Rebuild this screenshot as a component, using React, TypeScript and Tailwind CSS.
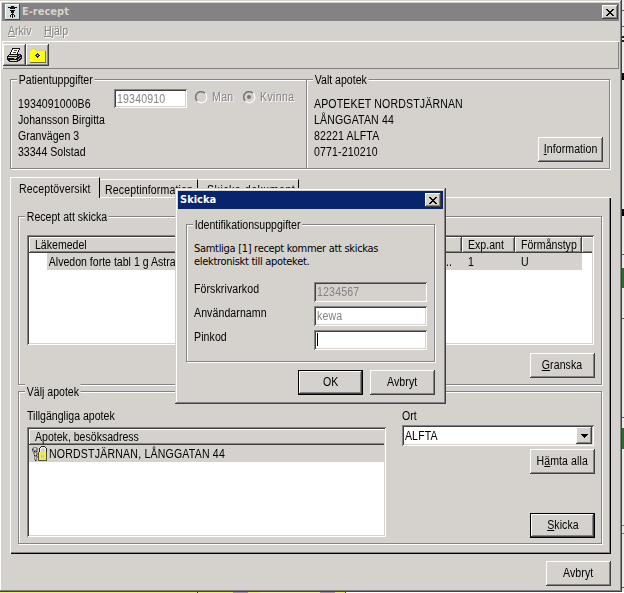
import type { ReactNode } from 'react';

function T({ children, className = '' }: { children: ReactNode; className?: string }) {
  return <span className={`inline-block origin-left scale-x-[0.88] whitespace-pre ${className}`}>{children}</span>;
}

function Button({ children, primary, className = '' }: { children: ReactNode; primary?: boolean; className?: string }) {
  const edge = primary
    ? 'border border-black shadow-[inset_-1px_-1px_0_#404040,inset_1px_1px_0_#fff,inset_-2px_-2px_0_#848284]'
    : 'shadow-[inset_-1px_-1px_0_#404040,inset_1px_1px_0_#fff,inset_-2px_-2px_0_#848284]';
  return (
    <button className={`flex h-[25px] w-[65px] shrink-0 items-center justify-center pb-px ${edge} ${className}`}>
      <span className="inline-block scale-x-[0.88] whitespace-pre tracking-[0.1px]">{children}</span>
    </button>
  );
}

function CloseButton() {
  return (
    <button className="flex h-[14px] w-4 items-center justify-center bg-[#d5d2cd] shadow-[inset_-1px_-1px_0_#404040,inset_1px_1px_0_#fff,inset_-2px_-2px_0_#848284]">
      <svg width="8" height="7" viewBox="0 0 8 7" shapeRendering="crispEdges">
        <path d="M0 0h2v1h1v1h2v-1h1v-1h2v1h-1v1h-1v1h-1v1h1v1h1v1h1v1h-2v-1h-1v-1h-2v1h-1v1h-2v-1h1v-1h1v-1h1v-1h-1v-1h-1v-1h-1z" fill="#000" />
      </svg>
    </button>
  );
}

function Group({ title, children, className = '' }: { title: string; children: ReactNode; className?: string }) {
  return (
    <section className={`relative shrink-0 border border-[#848284] shadow-[1px_1px_0_#fff,inset_1px_1px_0_#fff] ${className}`}>
      <T className="absolute -top-2 left-[6px] bg-[#d5d2cd] px-[2px] leading-[16px]">{title}</T>
      {children}
    </section>
  );
}

function Field({ value, className = '' }: { value: string; className?: string }) {
  return (
    <div className={`flex shrink-0 items-center pl-[3px] text-[#848284] shadow-[inset_1px_1px_0_#848284,inset_-1px_-1px_0_#fff,inset_2px_2px_0_#404040,inset_-2px_-2px_0_#d5d2cd] ${className}`}>
      <T className="tracking-[0.2px]">{value}</T>
    </div>
  );
}

function HeaderCell({ children, last, className = '' }: { children?: ReactNode; last?: boolean; className?: string }) {
  const edge = last
    ? 'shadow-[inset_0_-1px_0_#404040,inset_1px_1px_0_#fff,inset_0_-2px_0_#848284]'
    : 'shadow-[inset_-1px_-1px_0_#404040,inset_1px_1px_0_#fff,inset_-2px_-2px_0_#848284]';
  return (
    <div className={`flex h-4 items-center bg-[#d5d2cd] pl-[6px] ${edge} ${className}`}>
      <T>{children}</T>
    </div>
  );
}

function PersonIcon() {
  return (
    <svg width="15" height="16" viewBox="0 0 15 16" shapeRendering="crispEdges">
      <path d="M0 0h15v16H0z" fill="#d2dede" />
      <path d="M0 0h14v1H1v14H0z" fill="#fff" />
      <path d="M14 0h1v16H0v-1h14z" fill="#404848" />
      <path d="M3 3h3v1H3zM9 3h3v1H9zM5 4h2v1H5zM8 4h2v1H8zM6 2h3v2H6zM7 4h1v1H7zM5 6h1v1H5zM9 6h1v1H9zM6 6h3v3H6zM7 9h1v1H7zM6 10h3v1H6zM5 11h1v2H5zM9 11h1v2H9zM7 11h1v3H7z" fill="#111" />
    </svg>
  );
}

function PrinterIcon() {
  return (
    <svg width="17" height="16" viewBox="0 0 17 16" shapeRendering="crispEdges">
      <path d="M6 1h8v2h-1v2h-1v2h3v1h1v4h-1v1h-1v1h-2v1H3v-1H2v-1H1V9h1V8h1V7h1V5h1V3h1z" fill="#151515" />
      <path d="M7 2h6v1h-1v2h-1v2H5V5h1V3h1z" fill="#fff" />
      <path d="M8 3h3v1H8zM7 5h3v1H7z" fill="#444" />
      <path d="M3 8h8v1H3zM2 10h9v1H2zM4 13h7v1H4z" fill="#d5d2cd" />
      <path d="M12 9h1v1h-1zM13 8h1v1h-1zM12 12h1v1h-1zM13 11h1v1h-1zM14 10h1v1h-1z" fill="#aaa" />
      <path d="M8 11h2v1H8z" fill="#c8c84a" />
    </svg>
  );
}

function FolderIcon() {
  return (
    <svg width="17" height="15" viewBox="0 0 17 15" shapeRendering="crispEdges">
      <path d="M1 2h1V1h1V0h4v1h1v1h8v12H1z" fill="#ffff08" />
      <path d="M1 2h1V1h1V0h4v1h1v1h8v1H7V2H6V1H3v1H2v1H1z" fill="#d2c9a0" />
      <path d="M16 3h1v11h-1zM1 14h16v1H1z" fill="#77742a" />
      <path d="M6 7h1V6h1V5h1v1h1v1h1v1h-1v1H9v1H8V9H7V8H6z" fill="#fff" />
      <path d="M8 5h1v1h1v1h1v1h-1v1H9v1H8V9H7V8H6V7h1V6h1z" fill="#20207a" />
      <path d="M8 7h1v1H8z" fill="#fff" />
    </svg>
  );
}

function LockIcon() {
  return (
    <svg width="17" height="16" viewBox="0 0 17 16" shapeRendering="crispEdges">
      <path d="M2 1h4v1h1v4H6v1h1v2H6v1h1v2H6v3H4v-1H3V8H2V6H1V2h1z" fill="#888" />
      <path d="M3 2h2v2H3zM4 7h1v2H4zM4 11h1v2H4z" fill="#d5d2cd" />
      <path d="M1 3h1v1H1zM3 5h1v1H3zM5 5h1v1H5zM3 9h1v1H3zM5 9h1v1H5zM4 14h1v1H4z" fill="#222" />
      <path d="M8 2h1V1h1V0h4v1h1v1h1v5H8z" fill="#222" />
      <path d="M9 2h1V1h4v1h1v5h-1V3h-1V2h-2v1h-1v4H9z" fill="#eee" />
      <path d="M10 3h1V2h2v1h1v4h-4z" fill="#d5d2cd" />
      <path d="M7 6h9v9H7z" fill="#eaea62" />
      <path d="M7 6h1v8H7zM15 6h1v9H7v-1h8z" fill="#55552a" />
      <path d="M10 9h3v3h-3z" fill="#cfc9b0" />
    </svg>
  );
}

function Radio({ label, checked }: { label: string; checked?: boolean }) {
  return (
    <div className="flex items-center text-[#848284]">
      <svg width="13" height="13" viewBox="0 0 13 13">
        <circle cx="6" cy="6" r="5" fill="#d5d2cd" />
        <path d="M2.2 9.8A5.2 5.2 0 0 1 9.8 2.2" fill="none" stroke="#777577" strokeWidth="1.5" />
        <path d="M10.2 2.4A5.4 5.4 0 0 1 2.4 10.2" fill="none" stroke="#fff" strokeWidth="1.2" />
        {checked && <circle cx="6" cy="6" r="2" fill="#777577" />}
      </svg>
      <T className="ml-1 tracking-[0.4px] [text-shadow:1px_1px_0_#fff]">{label}</T>
    </div>
  );
}

function SendDialog() {
  const rows = [
    { label: 'Förskrivarkod', value: '1234567', bg: 'bg-[#d5d2cd]' },
    { label: 'Användarnamn', value: 'kewa', bg: 'bg-white' },
  ];
  return (
    <div className="absolute top-[188px] left-[175px] h-[216px] w-[271px] bg-[#d5d2cd] p-[3px] shadow-[inset_-1px_-1px_0_#404040,inset_1px_1px_0_#d5d2cd,inset_-2px_-2px_0_#848284,inset_2px_2px_0_#fff]">
      <div className="flex h-[18px] items-center justify-between bg-[#08246b] pr-[2px] pl-[2px] text-white">
        <span className="font-['DejaVu_Sans_Condensed','DejaVu_Sans',sans-serif] text-[11px] font-bold">Skicka</span>
        <CloseButton />
      </div>
      <Group title="Identifikationsuppgifter" className="mt-[15px] ml-2 h-[138px] w-[249px]">
        <p className="mt-[17px] ml-[7px] whitespace-pre font-['DejaVu_Sans_Condensed','DejaVu_Sans',sans-serif] text-[11px] leading-[13px] tracking-[-0.3px]">
          {'Samtliga [1] recept kommer att skickas\nelektroniskt till apoteket.'}
        </p>
        <div className="mt-[14px] mr-[7px] ml-[7px] flex flex-col gap-1">
          {rows.map((r) => (
            <div key={r.label} className="flex justify-between">
              <T className="leading-[15px] tracking-[0.1px]">{r.label}</T>
              <Field value={r.value} className={`h-5 w-[113px] ${r.bg}`} />
            </div>
          ))}
          <div className="flex justify-between">
            <T className="leading-[15px] tracking-[0.1px]">Pinkod</T>
            <div className="h-5 w-[113px] bg-white pt-[3px] pl-[3px] shadow-[inset_1px_1px_0_#848284,inset_-1px_-1px_0_#fff,inset_2px_2px_0_#404040,inset_-2px_-2px_0_#d5d2cd]">
              <div className="h-[13px] w-px bg-black" />
            </div>
          </div>
        </div>
      </Group>
      <div className="mt-2 mr-2 flex justify-end gap-[7px]">
        <Button primary>OK</Button>
        <Button>Avbryt</Button>
      </div>
    </div>
  );
}

export default function App() {
  return (
    <div className="relative h-[593px] w-[624px] overflow-hidden bg-[#eeece8] font-['Liberation_Sans',Arial,sans-serif] text-[12px] leading-[16px] text-black">
      <div className="flex h-[592px]">
        <main className="-ml-px flex w-[623px] shrink-0 flex-col bg-[#d5d2cd] p-[3px] shadow-[inset_-1px_-1px_0_#404040,inset_1px_1px_0_#d5d2cd,inset_-2px_-2px_0_#848284,inset_2px_2px_0_#fff]">
          <header className="flex h-[18px] shrink-0 items-center bg-[#848284] pr-px pl-[3px] text-[#d5d2cd]">
            <PersonIcon />
            <span className="ml-[2px] flex-1 font-['DejaVu_Sans_Condensed','DejaVu_Sans',sans-serif] text-[11px] font-bold">E-recept</span>
            <CloseButton />
          </header>
          <nav className="flex h-5 shrink-0 items-center pl-[6px] text-[#848284] [text-shadow:1px_1px_0_#fff]">
            <T className="w-9"><u>A</u>rkiv</T>
            <T><u>H</u>jälp</T>
          </nav>
          <div className="flex h-7 shrink-0 items-center pl-px shadow-[inset_1px_1px_0_#fff,inset_-1px_-1px_0_#848284]">
            <div className="flex h-[22px] w-[23px] items-center justify-center shadow-[inset_-1px_-1px_0_#404040,inset_1px_1px_0_#fff,inset_-2px_-2px_0_#848284]"><PrinterIcon /></div>
            <div className="flex h-[22px] w-[23px] items-center justify-center shadow-[inset_-1px_-1px_0_#404040,inset_1px_1px_0_#fff,inset_-2px_-2px_0_#848284]"><FolderIcon /></div>
          </div>

          <div className="mt-[10px] ml-2 flex shrink-0">
            <Group title="Patientuppgifter" className="flex h-[90px] w-[297px] pl-[7px]">
              <div className="mt-4 flex w-24 flex-col">
                <T className="tracking-[0.1px]">1934091000B6</T>
                <T>Johansson Birgitta</T>
                <T>Granvägen 3</T>
                <T>33344 Solstad</T>
              </div>
              <Field value="19340910" className="mt-[9px] h-[19px] w-[73px] bg-white" />
              <div className="mt-[9px] ml-2 flex h-4 gap-[6px]">
                <Radio label="Man" />
                <Radio label="Kvinna" checked />
              </div>
            </Group>
            <Group title="Valt apotek" className="flex h-[90px] w-[303px] justify-between border-l-0 pr-[6px] pl-[7px]">
              <div className="mt-4 flex flex-col tracking-[0.16px]">
                <T>APOTEKET NORDSTJÄRNAN</T>
                <T>LÅNGGATAN 44</T>
                <T>82221 ALFTA</T>
                <T>0771-210210</T>
              </div>
              <Button className="mt-[57px]"><u>I</u>nformation</Button>
            </Group>
          </div>

          <div className="mt-2 ml-2 flex h-5 shrink-0 items-end">
            <div className="z-10 -mb-px h-[21px] w-[90px] border-t border-r border-l border-t-white border-r-black border-l-white bg-[#d5d2cd] pt-[3px] pl-2"><T className="tracking-[0.15px]">Receptöversikt</T></div>
            <div className="h-[18px] w-[98px] border-t border-r border-t-white border-r-black pt-[2px] pl-[5px]"><T className="tracking-[0.15px]">Receptinformation</T></div>
            <div className="h-[18px] w-[101px] border-t border-r border-t-white border-r-black pt-[2px] pl-[9px]"><T className="tracking-[0.6px]">Skicka dokument</T></div>
          </div>
          <div className="ml-2 flex h-[357px] w-[601px] shrink-0 flex-col pt-[19px] pl-2 shadow-[inset_1px_1px_0_#fff,inset_-1px_-1px_0_#000,inset_-2px_-2px_0_#848284]">
            <Group title="Recept att skicka" className="flex h-[169px] w-[584px] flex-col">
              <div className="mt-[18px] ml-2 h-[110px] w-[567px] bg-white p-[2px] shadow-[inset_1px_1px_0_#848284,inset_-1px_-1px_0_#fff,inset_2px_2px_0_#404040,inset_-2px_-2px_0_#d5d2cd]">
                <div className="flex">
                  <HeaderCell className="w-[433px]">Läkemedel</HeaderCell>
                  <HeaderCell className="w-[53px]">Exp.ant</HeaderCell>
                  <HeaderCell className="w-[67px]">Förmånstyp</HeaderCell>
                  <HeaderCell last className="flex-1" />
                </div>
                <div className="ml-[18px] flex h-[17px] w-[535px] items-center bg-[#d5d2cd]">
                  <T className="w-[399px] pl-[2px]">Alvedon forte tabl 1 g Astra</T>
                  <T className="w-[22px]">..</T>
                  <T className="w-[53px]">1</T>
                  <T>U</T>
                </div>
              </div>
              <Button className="mt-2 mr-[6px] self-end"><u>G</u>ranska</Button>
            </Group>
            <Group title="Välj apotek" className="mt-[6px] flex h-[153px] w-[584px] pl-2">
              <div className="w-[375px] pt-4">
                <T>Tillgängliga apotek</T>
                <div className="mt-[3px] h-[110px] w-[359px] bg-white p-[2px] shadow-[inset_1px_1px_0_#848284,inset_-1px_-1px_0_#fff,inset_2px_2px_0_#404040,inset_-2px_-2px_0_#d5d2cd]">
                  <HeaderCell last>Apotek, besöksadress</HeaderCell>
                  <div className="flex h-[17px] items-center bg-[#d5d2cd] pl-[2px]">
                    <div className="w-[18px]"><LockIcon /></div>
                    <T className="tracking-[0.22px]">NORDSTJÄRNAN, LÅNGGATAN 44</T>
                  </div>
                </div>
              </div>
              <div className="flex w-[193px] flex-col items-end pt-4">
                <T className="self-start">Ort</T>
                <div className="mt-px mr-px flex h-[21px] w-48 items-center justify-between bg-white p-[2px] shadow-[inset_1px_1px_0_#848284,inset_-1px_-1px_0_#fff,inset_2px_2px_0_#404040,inset_-2px_-2px_0_#d5d2cd]">
                  <T className="pl-px tracking-[0.2px]">ALFTA</T>
                  <div className="flex h-[17px] w-4 items-center justify-center bg-[#d5d2cd] shadow-[inset_-1px_-1px_0_#404040,inset_1px_1px_0_#fff,inset_-2px_-2px_0_#848284]">
                    <svg width="7" height="4" viewBox="0 0 7 4" shapeRendering="crispEdges"><path d="M0 0h7v1h-1v1h-1v1h-1v1h-1v-1h-1v-1h-1v-1h-1z" /></svg>
                  </div>
                </div>
                <Button className="mt-[3px]">H<u>ä</u>mta alla</Button>
                <Button primary className="mt-[39px]"><u>S</u>kicka</Button>
              </div>
            </Group>
          </div>
          <Button className="mt-[7px] mr-[8px] self-end">Avbryt</Button>
        </main>

        {/* sliver of the window behind */}
        <div className="flex w-[2px] flex-col">
          <div className="h-[11px] border-b border-[#555]" />
          <div className="h-4 border-b border-[#555]" />
          <div className="mt-[9px] h-[6px] border-y-2 border-[#222]" />
          <div className="mt-[31px] h-[7px] bg-black" />
          <div className="mt-[129px] h-[7px] bg-black" />
          <div className="mt-[38px] h-px bg-[#555]" />
          <div className="mt-[13px] h-5 bg-[#2b6b2e]" />
          <div className="mt-[30px] h-px bg-[#555]" />
          <div className="mt-[98px] h-px bg-[#555]" />
          <div className="mt-[10px] h-[21px] bg-[#2b6b2e]" />
          <div className="mt-[76px] h-[9px] border-y border-[#777]" />
          <div className="mt-[53px] h-px bg-[#555]" />
        </div>
      </div>
      <div className="flex h-px">
        <div className="w-[197px] bg-[#eded6e]" />
        <div className="w-px bg-[#333]" />
        <div className="w-[35px] bg-[#eded6e]" />
        <div className="w-[15px] bg-[#a99aa5]" />
        <div className="w-[12px] bg-[#eded6e]" />
        <div className="w-[60px] bg-[#f2f29b]" />
        <div className="w-[15px] bg-[#a99aa5]" />
        <div className="w-[10px] bg-[#eded6e]" />
        <div className="w-px bg-[#2b6b2e]" />
        <div className="flex-1 bg-white" />
      </div>

      <SendDialog />
    </div>
  );
}
